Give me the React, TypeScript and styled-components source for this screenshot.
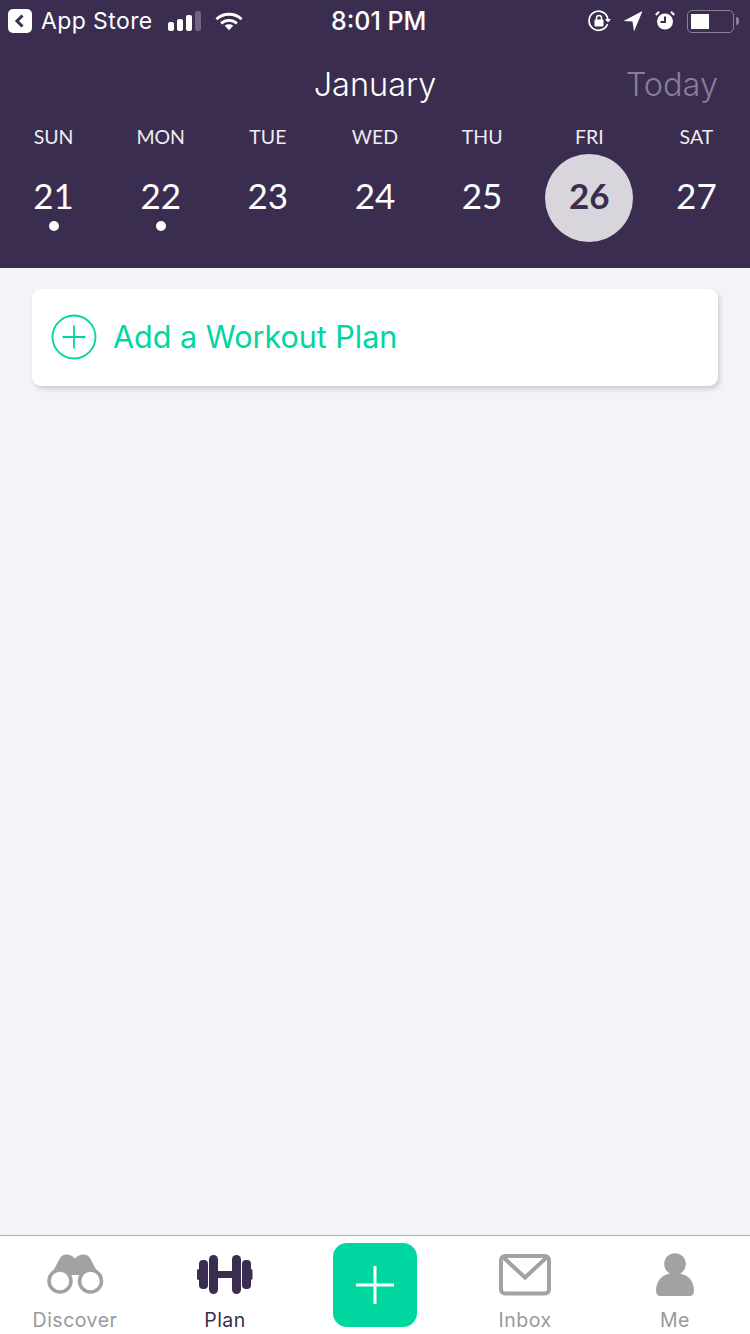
import styled, { createGlobalStyle } from "styled-components";

const PURPLE = "#3b2d50";
const GREEN = "#00d69f";
const GREY = "#a2a2a2";

const days = [
  { name: "SUN", date: 21, dot: true },
  { name: "MON", date: 22, dot: true },
  { name: "TUE", date: 23 },
  { name: "WED", date: 24 },
  { name: "THU", date: 25 },
  { name: "FRI", date: 26, selected: true },
  { name: "SAT", date: 27 },
];

const App = () => {
  return (
    <Screen>
      <GlobalStyle />
      <Header>
        <StatusBar>
          <StatusLeft>
            <BackBadge>
              <svg width="24" height="24" viewBox="0 0 24 24">
                <path d="M14.5 6.5 9 12l5.5 5.5" fill="none" stroke={PURPLE} strokeWidth="3" />
              </svg>
            </BackBadge>
            <StatusText>App Store</StatusText>
            <Signal>
              <SignalBar $height={9} />
              <SignalBar $height={12} />
              <SignalBar $height={16} />
              <SignalBar $height={20} $dim />
            </Signal>
            <svg width="28" height="21" viewBox="0 0 30 22">
              <path d="M1.5 8.5C9 1.5 21 1.5 28.5 8.5" fill="none" stroke="#fff" strokeWidth="3" />
              <path d="M6.5 13c4.8-4.3 12.2-4.3 17 0" fill="none" stroke="#fff" strokeWidth="3" />
              <path d="M10.5 15.5c2.6-1.9 6.4-1.9 9 0L15 20.5z" fill="#fff" />
            </svg>
          </StatusLeft>
          <Clock>8:01 PM</Clock>
          <StatusRight>
            <svg width="24" height="24" viewBox="0 0 24 24">
              <path d="M20.5 15a9.5 9.5 0 1 1 .4-5" fill="none" stroke="#fff" strokeWidth="1.7" />
              <path d="M18 10h6l-3 3.5z" fill="#fff" />
              <rect x="7.5" y="10.5" width="9" height="7" rx="1" fill="#fff" />
              <path d="M9.5 11V9a2.5 2.5 0 0 1 5 0v2" fill="none" stroke="#fff" strokeWidth="1.5" />
            </svg>
            <svg width="20" height="24" viewBox="0 0 20 24">
              <path d="M19.5 2 11 22.5 9.5 12.5 0.5 12z" fill="#fff" />
            </svg>
            <svg width="20" height="24" viewBox="0 0 20 24">
              <circle cx="10" cy="12.5" r="8" fill="#fff" />
              <path d="M10 7.5V13H5.5" fill="none" stroke={PURPLE} strokeWidth="2" />
              <path d="M0.8 6 4 2.8M19.2 6 16 2.8" stroke="#fff" strokeWidth="2" />
            </svg>
            <Battery>
              <BatteryBody>
                <BatteryLevel />
              </BatteryBody>
              <BatteryTip />
            </Battery>
          </StatusRight>
        </StatusBar>
        <TitleRow>
          <Month>January</Month>
          <Today>Today</Today>
        </TitleRow>
        <Week>
          {days.map((day) => (
            <Day key={day.name}>
              <DayName>{day.name}</DayName>
              <DateCell $selected={day.selected}>
                {day.date}
                {day.dot && <Dot />}
              </DateCell>
            </Day>
          ))}
        </Week>
      </Header>

      <Body>
        <AddCard>
          <svg width="46" height="46" viewBox="0 0 46 46">
            <circle cx="23" cy="23" r="21.5" fill="none" stroke={GREEN} strokeWidth="1.8" />
            <path d="M23 11.5v23M11.5 23h23" stroke={GREEN} strokeWidth="1.8" />
          </svg>
          <AddLabel>Add a Workout Plan</AddLabel>
        </AddCard>
      </Body>

      <TabBar>
        <Tab>
          <TabIcon>
            <svg width="58" height="44" viewBox="0 0 58 44">
              <path
                d="M3 26 13.5 6C16 0.5 24 0 29 5.5 34 0 42 0.5 44.5 6L55 26 44 22H14z"
                fill={GREY}
              />
              <circle cx="14" cy="28" r="11" fill="#fff" stroke={GREY} strokeWidth="3.5" />
              <circle cx="44.5" cy="28" r="11" fill="#fff" stroke={GREY} strokeWidth="3.5" />
            </svg>
          </TabIcon>
          <TabLabel>Discover</TabLabel>
        </Tab>
        <Tab>
          <TabIcon>
            <svg width="58" height="44" viewBox="0 0 58 44">
              <rect x="1" y="16" width="3.5" height="11" rx="1.7" fill={PURPLE} />
              <rect x="3" y="7" width="9" height="29" rx="4" fill={PURPLE} />
              <rect x="13" y="2" width="9" height="39" rx="4.5" fill={PURPLE} />
              <rect x="22" y="18" width="14" height="7" fill={PURPLE} />
              <rect x="36" y="2" width="9" height="39" rx="4.5" fill={PURPLE} />
              <rect x="46" y="7" width="9" height="29" rx="4" fill={PURPLE} />
              <rect x="53" y="16" width="3.5" height="11" rx="1.7" fill={PURPLE} />
            </svg>
          </TabIcon>
          <TabLabel $active>Plan</TabLabel>
        </Tab>
        <Tab>
          <AddButton>
            <svg width="40" height="40" viewBox="0 0 40 40">
              <path d="M20 1v38M1 20h38" stroke="#fff" strokeWidth="3" />
            </svg>
          </AddButton>
        </Tab>
        <Tab>
          <TabIcon>
            <svg width="52" height="44" viewBox="0 0 52 44">
              <rect x="2" y="3" width="48" height="37.6" rx="4" fill="none" stroke={GREY} strokeWidth="4" />
              <path d="M5 5 26 24.5 47 5" fill="none" stroke={GREY} strokeWidth="4" />
            </svg>
          </TabIcon>
          <TabLabel>Inbox</TabLabel>
        </Tab>
        <Tab>
          <TabIcon>
            <svg width="40" height="44" viewBox="0 0 40 44">
              <circle cx="20" cy="11" r="10.8" fill={GREY} />
              <path d="M1 38c0-12 8-18 19-18s19 6 19 18c0 3-2 5-4 5H5c-2 0-4-2-4-5z" fill={GREY} />
            </svg>
          </TabIcon>
          <TabLabel>Me</TabLabel>
        </Tab>
      </TabBar>
    </Screen>
  );
};

const GlobalStyle = createGlobalStyle`
  html, body {
    margin: 0;
    padding: 0;
  }
  body {
    font-family: Inter, "Liberation Sans", sans-serif;
  }
`;

const Screen = styled.div`
  display: flex;
  flex-direction: column;
  width: 750px;
  height: 1334px;
  overflow: hidden;
  background-color: #f4f3f8;
`;

const Header = styled.header`
  display: flex;
  flex-direction: column;
  height: 268px;
  background-color: ${PURPLE};
  color: #ffffff;
`;

const StatusBar = styled.div`
  display: grid;
  grid-template-columns: 323px auto 1fr;
  align-items: center;
  height: 42px;
  padding: 0 11px 0 8px;
`;

const StatusLeft = styled.div`
  display: flex;
  align-items: center;
`;

const BackBadge = styled.div`
  display: flex;
  align-items: center;
  justify-content: center;
  width: 24px;
  height: 24px;
  margin-right: 9px;
  border-radius: 5px;
  background-color: #ffffff;
`;

const StatusText = styled.span`
  margin-right: 15px;
  font-size: 23px;
  letter-spacing: 0.4px;
`;

const Signal = styled.div`
  display: flex;
  align-items: flex-end;
  gap: 3px;
  margin-right: 14px;
`;

const SignalBar = styled.div<{ $height: number; $dim?: boolean }>`
  width: 6px;
  height: ${(p) => p.$height}px;
  border-radius: 2px;
  background-color: ${(p) => (p.$dim ? "#6f6581" : "#ffffff")};
`;

const Clock = styled.span`
  font-size: 25px;
  font-weight: 500;
`;

const StatusRight = styled.div`
  display: flex;
  align-items: center;
  justify-content: flex-end;
  gap: 12px;
`;

const Battery = styled.div`
  display: flex;
  align-items: center;
`;

const BatteryBody = styled.div`
  box-sizing: border-box;
  width: 47px;
  height: 23px;
  padding: 3px;
  border: 1.5px solid #8a8197;
  border-radius: 5px;
`;

const BatteryLevel = styled.div`
  width: 18px;
  height: 100%;
  background-color: #ffffff;
`;

const BatteryTip = styled.div`
  width: 3px;
  height: 8px;
  margin-left: 2px;
  border-radius: 0 3px 3px 0;
  background-color: #8a8197;
`;

const TitleRow = styled.div`
  position: relative;
  display: flex;
  justify-content: center;
  align-items: center;
  height: 48px;
  margin-top: 18px;
`;

const Month = styled.h1`
  margin: 0;
  font-size: 32.5px;
  font-weight: 300;
`;

const Today = styled.span`
  position: absolute;
  right: 32px;
  top: 50%;
  transform: translateY(-50%);
  font-size: 32.5px;
  font-weight: 300;
  color: #887f96;
`;

const Week = styled.div`
  display: grid;
  grid-template-columns: repeat(7, 1fr);
  margin-top: 14px;
`;

const Day = styled.div`
  display: flex;
  flex-direction: column;
  align-items: center;
`;

const DayName = styled.div`
  height: 29px;
  font-family: Lato, sans-serif;
  font-size: 19.5px;
  line-height: 29px;
  color: #eeecf1;
`;

const DateCell = styled.div<{ $selected?: boolean }>`
  position: relative;
  box-sizing: border-box;
  display: flex;
  align-items: center;
  justify-content: center;
  width: 88px;
  height: 88px;
  margin-top: 3px;
  padding-bottom: 7px;
  border-radius: 50%;
  background-color: ${(p) => (p.$selected ? "#d8d5dc" : "transparent")};
  color: ${(p) => (p.$selected ? PURPLE : "#ffffff")};
  font-family: Lato, sans-serif;
  font-size: 35px;
  font-weight: ${(p) => (p.$selected ? 700 : 400)};
`;

const Dot = styled.span`
  position: absolute;
  left: 39px;
  top: 67px;
  width: 10px;
  height: 10px;
  border-radius: 50%;
  background-color: #ffffff;
`;

const Body = styled.main`
  flex: 1;
  padding: 21px 32px 0;
`;

const AddCard = styled.div`
  box-sizing: border-box;
  display: flex;
  align-items: center;
  gap: 16px;
  height: 97px;
  padding: 0 0 1px 19px;
  border-radius: 9px;
  background-color: #ffffff;
  box-shadow: 2px 3px 5px rgba(0, 0, 0, 0.16);
`;

const AddLabel = styled.span`
  margin-bottom: 2px;
  font-size: 30.5px;
  color: ${GREEN};
`;

const TabBar = styled.nav`
  display: grid;
  grid-template-columns: repeat(5, 1fr);
  height: 98px;
  border-top: 1px solid #b0b0b0;
  background-color: #ffffff;
`;

const Tab = styled.div`
  display: flex;
  flex-direction: column;
  align-items: center;
  padding-top: 17px;
`;

const TabIcon = styled.div`
  display: flex;
  height: 44px;
`;

const TabLabel = styled.span<{ $active?: boolean }>`
  margin-top: 11px;
  font-size: 19.5px;
  line-height: 24px;
  letter-spacing: 0.5px;
  color: ${(p) => (p.$active ? PURPLE : "#999999")};
`;

const AddButton = styled.div`
  display: flex;
  align-items: center;
  justify-content: center;
  width: 84px;
  height: 84px;
  margin-top: -10px;
  border-radius: 14px;
  background-color: ${GREEN};
`;

export default App;
